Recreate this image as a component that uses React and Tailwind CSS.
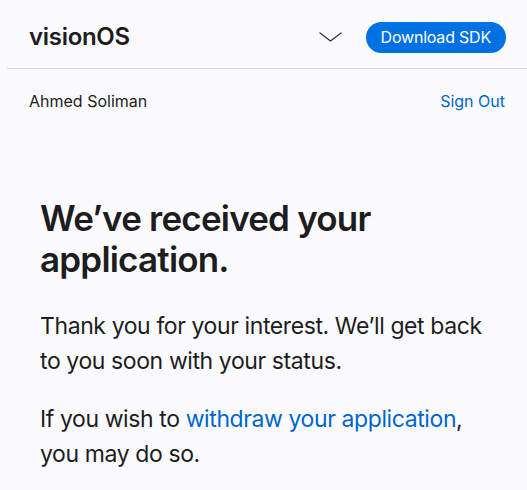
export default function App() {
  return (
    <div className="min-h-[490px] bg-[#fbfbfd] text-[#1d1d1f]" style={{ fontFamily: 'Inter, "Liberation Sans", sans-serif' }}>
      <header className="ml-[7px] flex h-[69px] items-center border-b border-[#d6d6d8] pl-[22px] pr-[21px] pt-[6px]">
        <h1 className="flex-1 text-[24px] font-semibold tracking-[-0.3px]">visionOS</h1>
        <svg width="23" height="10" viewBox="0 0 23 10" className="mr-[24px]" fill="none">
          <path d="M1 1 L11.5 9 L22 1" stroke="#333336" strokeWidth="1.3" strokeLinecap="round" strokeLinejoin="round" />
        </svg>
        <button className="h-[31px] rounded-full bg-[#0071e3] px-[15px] text-[16px] text-white tracking-[-0.2px]">
          Download SDK
        </button>
      </header>

      <div className="flex items-center justify-between pl-[29px] pr-[22px] pt-[20px] text-[16px] leading-[24px]">
        <span>Ahmed Soliman</span>
        <a href="#" className="text-[#0066cc]">Sign Out</a>
      </div>

      <main className="pl-[40px] pr-[30px] pt-[85px]">
        <h2 className="text-[35px] font-semibold leading-[41px] tracking-[-0.8px]">
          We’ve received your application.
        </h2>
        <p className="mt-[29px] text-[23px] leading-[35px] tracking-[-0.4px]">
          Thank you for your interest. We’ll get back to you soon with your status.
        </p>
        <p className="mt-[23px] text-[23px] leading-[35px] tracking-[-0.4px]">
          If you wish to <a href="#" className="text-[#0066cc]">withdraw your application</a>, you may do so.
        </p>
      </main>
    </div>
  );
}
